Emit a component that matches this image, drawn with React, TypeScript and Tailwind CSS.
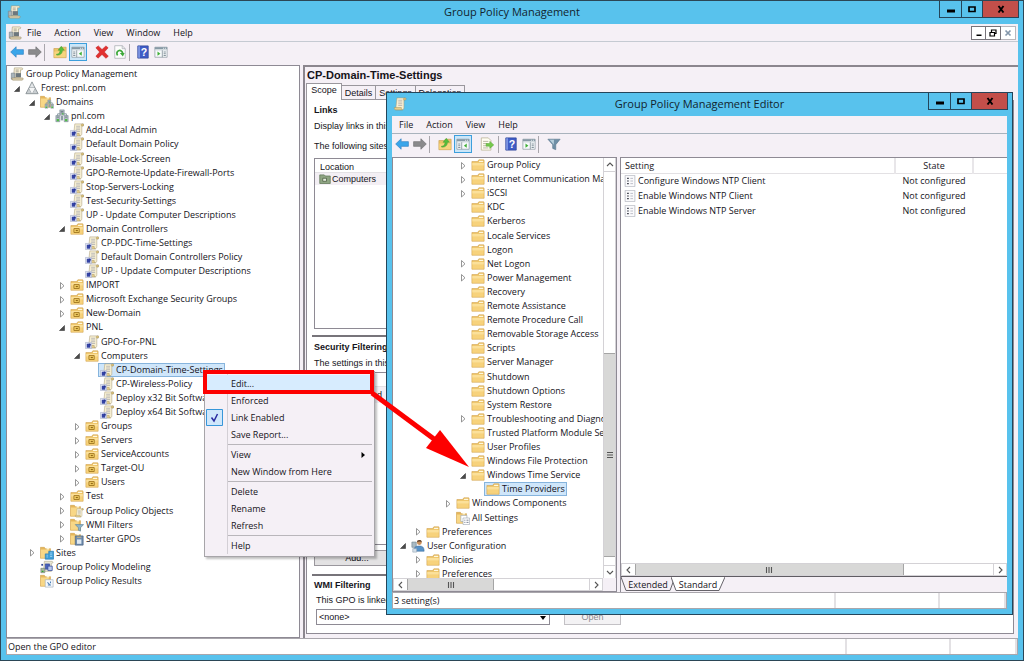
import type { ReactNode } from 'react';
import clsx from 'clsx';

type IconName =
  | 'console' | 'scroll' | 'forest' | 'domains' | 'domain' | 'gpo' | 'ou' | 'folder'
  | 'gpoFolder' | 'wmi' | 'starter' | 'sites' | 'modeling' | 'results' | 'user' | 'allSettings'
  | 'setting' | 'back' | 'forward' | 'up' | 'pane' | 'paneRight' | 'delete' | 'refresh'
  | 'help' | 'export' | 'filter';

interface TreeNode {
  level: number;
  icon: IconName;
  label: string;
  open?: boolean;
  selected?: boolean;
}

const consoleTree: TreeNode[] = [
  { level: 0, icon: 'console', label: 'Group Policy Management' },
  { level: 1, icon: 'forest', label: 'Forest: pnl.com', open: true },
  { level: 2, icon: 'domains', label: 'Domains', open: true },
  { level: 3, icon: 'domain', label: 'pnl.com', open: true },
  { level: 4, icon: 'gpo', label: 'Add-Local Admin' },
  { level: 4, icon: 'gpo', label: 'Default Domain Policy' },
  { level: 4, icon: 'gpo', label: 'Disable-Lock-Screen' },
  { level: 4, icon: 'gpo', label: 'GPO-Remote-Update-Firewall-Ports' },
  { level: 4, icon: 'gpo', label: 'Stop-Servers-Locking' },
  { level: 4, icon: 'gpo', label: 'Test-Security-Settings' },
  { level: 4, icon: 'gpo', label: 'UP - Update Computer Descriptions' },
  { level: 4, icon: 'ou', label: 'Domain Controllers', open: true },
  { level: 5, icon: 'gpo', label: 'CP-PDC-Time-Settings' },
  { level: 5, icon: 'gpo', label: 'Default Domain Controllers Policy' },
  { level: 5, icon: 'gpo', label: 'UP - Update Computer Descriptions' },
  { level: 4, icon: 'ou', label: 'IMPORT', open: false },
  { level: 4, icon: 'ou', label: 'Microsoft Exchange Security Groups', open: false },
  { level: 4, icon: 'ou', label: 'New-Domain', open: false },
  { level: 4, icon: 'ou', label: 'PNL', open: true },
  { level: 5, icon: 'gpo', label: 'GPO-For-PNL' },
  { level: 5, icon: 'ou', label: 'Computers', open: true },
  { level: 6, icon: 'gpo', label: 'CP-Domain-Time-Settings', selected: true },
  { level: 6, icon: 'gpo', label: 'CP-Wireless-Policy' },
  { level: 6, icon: 'gpo', label: 'Deploy x32 Bit Software' },
  { level: 6, icon: 'gpo', label: 'Deploy x64 Bit Software' },
  { level: 5, icon: 'ou', label: 'Groups', open: false },
  { level: 5, icon: 'ou', label: 'Servers', open: false },
  { level: 5, icon: 'ou', label: 'ServiceAccounts', open: false },
  { level: 5, icon: 'ou', label: 'Target-OU', open: false },
  { level: 5, icon: 'ou', label: 'Users', open: false },
  { level: 4, icon: 'ou', label: 'Test', open: false },
  { level: 4, icon: 'gpoFolder', label: 'Group Policy Objects', open: false },
  { level: 4, icon: 'wmi', label: 'WMI Filters', open: false },
  { level: 4, icon: 'starter', label: 'Starter GPOs', open: false },
  { level: 2, icon: 'sites', label: 'Sites', open: false },
  { level: 2, icon: 'modeling', label: 'Group Policy Modeling' },
  { level: 2, icon: 'results', label: 'Group Policy Results' },
];

const editorTree: TreeNode[] = [
  { level: 5, icon: 'folder', label: 'Group Policy', open: false },
  { level: 5, icon: 'folder', label: 'Internet Communication Management', open: false },
  { level: 5, icon: 'folder', label: 'iSCSI', open: false },
  { level: 5, icon: 'folder', label: 'KDC' },
  { level: 5, icon: 'folder', label: 'Kerberos' },
  { level: 5, icon: 'folder', label: 'Locale Services' },
  { level: 5, icon: 'folder', label: 'Logon' },
  { level: 5, icon: 'folder', label: 'Net Logon', open: false },
  { level: 5, icon: 'folder', label: 'Power Management', open: false },
  { level: 5, icon: 'folder', label: 'Recovery' },
  { level: 5, icon: 'folder', label: 'Remote Assistance' },
  { level: 5, icon: 'folder', label: 'Remote Procedure Call' },
  { level: 5, icon: 'folder', label: 'Removable Storage Access' },
  { level: 5, icon: 'folder', label: 'Scripts' },
  { level: 5, icon: 'folder', label: 'Server Manager' },
  { level: 5, icon: 'folder', label: 'Shutdown' },
  { level: 5, icon: 'folder', label: 'Shutdown Options' },
  { level: 5, icon: 'folder', label: 'System Restore' },
  { level: 5, icon: 'folder', label: 'Troubleshooting and Diagnostics', open: false },
  { level: 5, icon: 'folder', label: 'Trusted Platform Module Services' },
  { level: 5, icon: 'folder', label: 'User Profiles' },
  { level: 5, icon: 'folder', label: 'Windows File Protection' },
  { level: 5, icon: 'folder', label: 'Windows Time Service', open: true },
  { level: 6, icon: 'folder', label: 'Time Providers', selected: true },
  { level: 4, icon: 'folder', label: 'Windows Components', open: false },
  { level: 4, icon: 'allSettings', label: 'All Settings' },
  { level: 2, icon: 'folder', label: 'Preferences', open: false },
  { level: 1, icon: 'user', label: 'User Configuration', open: true },
  { level: 2, icon: 'folder', label: 'Policies', open: false },
  { level: 2, icon: 'folder', label: 'Preferences', open: false },
];

const settings = [
  { name: 'Configure Windows NTP Client', state: 'Not configured' },
  { name: 'Enable Windows NTP Client', state: 'Not configured' },
  { name: 'Enable Windows NTP Server', state: 'Not configured' },
];

const menuGroups: Array<Array<{ label: string; hot?: boolean; checked?: boolean; submenu?: boolean }>> = [
  [{ label: 'Edit...', hot: true }, { label: 'Enforced' }, { label: 'Link Enabled', checked: true }, { label: 'Save Report...' }],
  [{ label: 'View', submenu: true }, { label: 'New Window from Here' }],
  [{ label: 'Delete' }, { label: 'Rename' }, { label: 'Refresh' }],
  [{ label: 'Help' }],
];

const yellowFolder = (
  <>
    <path d="M1 4h6.500l1.500-2h5.500l.5 1v11H1z" fill="#e9bd5c" stroke="#cfa04a" strokeWidth=".6" />
    <path d="M9.500 3h4.500v1.500H8.700z" fill="#fff8df" />
    <path d="M1.500 5.500h13v8h-13z" fill="#f7d27c" />
    <path d="M1.500 5.500h13v3h-13z" fill="#fbe09a" />
  </>
);

const narrowFolder = (
  <>
    <path d="M.5 1.500h4.500l1 1.500h6v11H.5z" fill="#e6b75a" stroke="#cc9c45" strokeWidth=".6" />
    <path d="M1 4h9v9.500H1z" fill="#f8d786" />
    <path d="M7.500 2h3v2h-3z" fill="#fff6d8" />
  </>
);

const servers = (
  <>
    <path d="M3 9V5.500h10V9M8 6.500V4" stroke="#7d8f99" fill="none" />
    <path d="M5.500 1h5v6h-5zM1 7.500h4.500v7H1zM10.500 7.500H15v7h-4.500z" fill="#b3bfc5" stroke="#7c8b94" strokeWidth=".7" />
    <path d="M6.500 2.800h3M6.500 4.500h3M2 9.300h2.500M11.500 9.300H14" stroke="#56666f" strokeWidth=".8" />
    <path d="M2 11.500h2.500V14H2zM11.500 11.500H14V14h-2.500zM8 4.800h1.800v1.600H8z" fill="#4fbb45" />
    <path d="M6.700 8h2.600v5H6.700z" fill="#8d9ca5" />
  </>
);

const parchment = (
  <>
    <path d="M4.500 1h9.500c1.300 0 1.500 2.200 0 2.400h-1.500V12c0 2-1 2.700-2.500 2.700H3z" fill="#f7efd2" stroke="#a89b78" strokeWidth=".6" />
    <path d="M12.500 3.400c-1 0-1-2.400.8-2.400 1.700 0 1.500 2.400.3 2.400z" fill="#e0c476" stroke="#9c8955" strokeWidth=".5" />
    <path d="M1.500 12h8c0 1.500.4 2.500 1.400 2.700H3c-1.200 0-1.700-1.300-1.500-2.700z" fill="#e7cf8c" stroke="#9c8955" strokeWidth=".5" />
    <path d="M6 3.700h4.500M6 5.700h4.500M6 7.700h4.500M6 9.700h4.500" stroke="#a5a6ad" strokeWidth=".8" />
  </>
);

const paneFrame = (
  <>
    <path d="M1 2.500h14v11.500H1z" fill="#f7fafb" stroke="#8b98a1" strokeWidth=".8" />
    <path d="M1 2.500h14v2.500H1z" fill="#8799a5" />
    <path d="M10.500 3.800h1M12.500 3.800h1" stroke="#fff" />
    <path d="M1 5.800h14" stroke="#d3dbe0" />
  </>
);

const drawings: Record<IconName, ReactNode> = {
  console: (
    <>
      <path d="M5 1h8.500c1.300 0 1.500 2 0 2.200H12V12H4z" fill="#f5eed6" stroke="#a89b78" strokeWidth=".7" />
      <path d="M6.500 3.500H10M6.500 5.500H10" stroke="#a39d8c" />
      <path d="M1.500 7h4v7h-4z" fill="#a9b5bb" stroke="#74818a" strokeWidth=".7" />
      <path d="M6.500 7h6v4.500h-6z" fill="#6c777d" />
      <path d="M2 12.500h12.500c.8 0 .8 2.500-.8 2.500H3z" fill="#dccfae" stroke="#948765" strokeWidth=".6" />
    </>
  ),
  scroll: parchment,
  forest: (
    <>
      <path d="M8 1 11.500 8H4.500z" fill="#e4e7e9" stroke="#7d868b" strokeWidth=".9" />
      <path d="M4.500 8 8 14.500H1zM11.500 8 15 14.500H8z" fill="#c9ced1" stroke="#7d868b" strokeWidth=".9" />
      <path d="M4.500 8h7L8 14.500z" fill="#f4f5f6" />
    </>
  ),
  domains: (
    <>
      {narrowFolder}
      <g transform="translate(5 5) scale(.7)">{servers}</g>
    </>
  ),
  domain: servers,
  gpo: (
    <>
      <g transform="translate(1 0)">{parchment}</g>
      <path d="M.5 8.500h7v7h-7z" fill="#e9edf8" stroke="#a4adc8" strokeWidth=".7" />
      <path d="M2 10h4v4.500H2z" fill="#3443a3" />
      <path d="m4 9.800 2.500.2v2.500z" fill="#1d2b8f" />
    </>
  ),
  ou: (
    <>
      {yellowFolder}
      <path d="M4.500 7.500h6v4.500h-6z" fill="#f6d368" stroke="#a67c25" strokeWidth="1.100" />
      <path d="M6.500 9h2.500v1.500H6.500z" fill="#93691a" />
    </>
  ),
  folder: yellowFolder,
  gpoFolder: (
    <>
      {narrowFolder}
      <g transform="translate(5 4.500) scale(.7)">{parchment}</g>
    </>
  ),
  wmi: (
    <>
      {narrowFolder}
      <path d="M6 7.500h9.500l-3.500 3.700V15l-2.400-1v-2.800z" fill="#8fb5ca" stroke="#5c8196" strokeWidth=".7" />
    </>
  ),
  starter: (
    <>
      {narrowFolder}
      <path d="M6 4.500h9v10.500H6z" fill="#6f8db0" stroke="#4a617d" strokeWidth=".8" />
      <path d="M8 8.500h5v5H8z" fill="#dfe9f2" />
      <path d="M8 6h5" stroke="#d8bd87" />
    </>
  ),
  sites: (
    <>
      {narrowFolder}
      <path d="M6 9h4V6h5.500v9H6z" fill="#3f9fd8" stroke="#2a7fb7" strokeWidth=".8" />
      <path d="M7.500 10.500h1.500M7.500 12.500h1.500M11.500 8H14M11.500 10H14M11.500 12H14" stroke="#b9e2f8" strokeWidth=".8" />
    </>
  ),
  modeling: (
    <>
      <path d="M5 1.500h9l1 1.500-2 1v9H4z" fill="#e9e6d4" stroke="#a9a283" strokeWidth=".6" />
      <path d="M6 4.500h5v6H6z" fill="#4a63bd" stroke="#2f4596" strokeWidth=".7" />
      <path d="M9 7h5v5H9z" fill="#b9c9ef" stroke="#2f4596" strokeWidth=".8" />
      <path d="M1 9.500h4.500v5H1z" fill="#a9b7a2" stroke="#6c7d69" strokeWidth=".7" />
      <path d="M2 13h2" stroke="#2fa52a" strokeWidth="1.400" />
      <path d="M1.500 4.500h2v2h-2z" fill="#2f4596" />
    </>
  ),
  results: (
    <>
      {narrowFolder}
      <path d="M6 6.500h9v8.500H6z" fill="#f4f8fc" stroke="#a3afbc" strokeWidth=".7" />
      <path d="M8.500 9.500 11 12M9 12.500h3.500M12 8.500v2" stroke="#4d7fb8" fill="none" strokeWidth="1.200" />
    </>
  ),
  user: (
    <>
      <path d="M1 3.500h5v6H1z" fill="#a9bac4" stroke="#6f818b" strokeWidth=".7" />
      <circle cx="9.500" cy="4" r="2.800" fill="#c98f5a" />
      <path d="M6.800 3.500c0-3 5.500-3.200 5.500 0-1.500-1-3.500-1-5.500 0z" fill="#5c4230" />
      <path d="M3 14c0-4 2-6 6.500-6s5.500 2.500 5.500 6z" fill="#5791c6" stroke="#3c6c9d" strokeWidth=".6" />
      <path d="M2 11h4.500v4H2z" fill="#d5e0e9" stroke="#8c9cab" strokeWidth=".6" />
    </>
  ),
  allSettings: (
    <>
      {narrowFolder}
      <path d="M5.500 5h7v7h-7z" fill="#fff" stroke="#9aa5b0" strokeWidth=".7" />
      <path d="M8 8h7.500v7.500H8z" fill="#fff" stroke="#9aa5b0" strokeWidth=".7" />
      <path d="M9.500 10.500h1.200M12 10.500h2.300M9.500 13h1.200M12 13h2.300" stroke="#6a7488" />
    </>
  ),
  setting: (
    <>
      <path d="M1.500.5h13v15h-13z" fill="#fafafc" stroke="#b3b5bf" />
      <path d="M4 4.500h2.500M4 8h2.500M4 11.500h2.500" stroke="#4b4e58" strokeWidth="1.600" />
      <path d="M8.500 4.500H12M8.500 8H12M8.500 11.500H12" stroke="#a9abb8" />
    </>
  ),
  back: <path d="M.8 8 7 2v3.300h8.300v5.400H7V14z" fill="#3aa6ea" stroke="#3284c4" strokeWidth=".8" />,
  forward: <path d="M15.200 8 9 2v3.300H.7v5.400H9V14z" fill="#8a8a8c" stroke="#727276" strokeWidth=".8" />,
  up: (
    <>
      <path d="M1 4h6l1.500-1.500H15V14.500H1z" fill="#edc468" stroke="#c79d4a" strokeWidth=".7" />
      <path d="M1.500 7.500h13v6.500h-13z" fill="#f7d57f" />
      <path d="M4 10.500c3 0 4-2 4-4.500H5.800L9.500 1.500 13 6h-2.200c0 4-2.800 6-6.800 5.500z" fill="#57bd3c" stroke="#3f9a2d" strokeWidth=".5" />
    </>
  ),
  pane: (
    <>
      {paneFrame}
      <path d="M6.500 6v8" stroke="#8b98a1" />
      <path d="M2.500 8H5M2.500 10H5M2.500 12H5" stroke="#71818c" />
      <path d="M12.300 7.500v4.800L9 9.900z" fill="#3fae35" />
    </>
  ),
  paneRight: (
    <>
      {paneFrame}
      <path d="M9.500 6v8" stroke="#8b98a1" />
      <path d="M11 8h2.500M11 10h2.500M11 12h2.500" stroke="#71818c" />
      <path d="M4 7.500v4.800l3.300-2.400z" fill="#3fae35" />
    </>
  ),
  delete: <path d="M1 3.200 3.800 1 8 5.200 12.500 1 15 3.200 10.700 8l4.500 4.800-2.700 2.400L8 10.800 3.500 15 1 12.800 5.300 8z" fill="#e23030" stroke="#bd2020" strokeWidth=".6" />,
  refresh: (
    <>
      <path d="M2 .8h8.500L14 4.200v11H2z" fill="#fdfdfd" stroke="#a3a9ae" strokeWidth=".8" />
      <path d="M10.500.8v3.400H14" fill="none" stroke="#a3a9ae" strokeWidth=".8" />
      <path d="M5.300 11.800A3.300 3.300 0 1 1 11 9.300" fill="none" stroke="#3da83a" strokeWidth="2" />
      <path d="M7.800 9h5.500l-2 4z" fill="#3da83a" />
    </>
  ),
  help: (
    <>
      <path d="M2 1h12v14H2z" fill="#3f5cc6" stroke="#2d4398" strokeWidth=".8" />
      <path d="M2.500 1.500h2v13h-2z" fill="#7f97e2" />
      <text x="9.200" y="12.500" fontSize="12" fontWeight="700" textAnchor="middle" fill="#fff" fontFamily="Liberation Sans, sans-serif">?</text>
    </>
  ),
  export: (
    <>
      <path d="M1.500 1h8l3 3v11h-11z" fill="#fffdf2" stroke="#b5ac8b" strokeWidth=".8" />
      <path d="M3.500 5h6M3.500 7.500h5M3.500 10h4M3.500 12.500h6" stroke="#b3ae9c" />
      <path d="M7 7.500h4.200V5L15.700 9l-4.500 4v-2.500H7z" fill="#77c94c" stroke="#52a534" strokeWidth=".6" />
    </>
  ),
  filter: (
    <>
      <path d="M1 2.500h14L10 8.800V14.500L6.500 13V8.800z" fill="#6f8fa6" stroke="#5a788d" strokeWidth=".7" />
      <path d="M3 3.200h5L7.500 12V8.500z" fill="#b7cfdc" />
    </>
  ),
};

function Icon({ name, className = 'size-3.5' }: { name: IconName; className?: string }) {
  return (
    <svg viewBox="0 0 16 16" className={clsx('shrink-0', className)} aria-hidden="true">
      {drawings[name]}
    </svg>
  );
}

function Tree({ nodes, label, className }: { nodes: TreeNode[]; label: string; className: string }) {
  return (
    <ul role="tree" aria-label={label} className={clsx('grid auto-rows-fr', className)}>
      {nodes.map((node, i) => {
        const hasArrow = node.open !== undefined;
        return (
          <li
            key={i}
            role="treeitem"
            aria-level={node.level + 1}
            aria-expanded={node.open}
            aria-selected={!!node.selected}
            className="flex min-h-0 items-center whitespace-nowrap leading-3"
            style={{ paddingLeft: node.level * 15 + (hasArrow ? -10 : 1) }}
          >
            {hasArrow && (
              <svg viewBox="0 0 11 11" className="size-[11px] shrink-0" aria-hidden="true">
                {node.open ? <path d="M7.500 3.500v5h-5z" fill="#4a4a4a" stroke="#3a3a3a" strokeWidth=".6" /> : <path d="M3.500 2.500v6.500L7 5.800z" fill="#fff" stroke="#8a8a8a" strokeWidth=".9" />}
              </svg>
            )}
            <span
              className={clsx(
                'flex h-3.5 items-center gap-0.5 border px-px',
                node.selected ? 'border-[#86b4dd] bg-[#cfe6fa]' : 'border-transparent',
              )}
            >
              <Icon name={node.icon} />
              <span>{node.label}</span>
            </span>
          </li>
        );
      })}
    </ul>
  );
}

function CaptionButtons() {
  return (
    <div className="flex h-[17px] border border-t-0 border-[#24455a]">
      <button aria-label="Minimize" className="flex w-[21px] items-center justify-center">
        <svg viewBox="0 0 10 8" className="h-2 w-2.5"><path d="M1 4.500h8v3H1z" /></svg>
      </button>
      <button aria-label="Maximize" className="flex w-[21px] items-center justify-center border-l border-[#24455a]">
        <svg viewBox="0 0 10 8" className="h-2 w-2.5"><path d="M2 2h6v4.500H2z" fill="none" stroke="#000" strokeWidth="1.700" /></svg>
      </button>
      <button aria-label="Close" className="flex w-9 items-center justify-center border-l border-[#24455a] bg-[#c24f4a]">
        <svg viewBox="0 0 10 8" className="h-2 w-2.5"><path d="m2.500 1 5 6.500M7.500 1l-5 6.500" stroke="#000" strokeWidth="1.900" /></svg>
      </button>
    </div>
  );
}

function TitleBar({ title, icon }: { title: string; icon: IconName }) {
  return (
    <header className="grid h-[23px] shrink-0 grid-cols-[1fr_auto_1fr] items-start px-1">
      <Icon name={icon} className="mt-1 ml-0.5 size-3.5" />
      <h1 className="pt-[3px] text-[11px] leading-4 text-[#12242e]">{title}</h1>
      <div className="flex justify-end">
        <CaptionButtons />
      </div>
    </header>
  );
}

function ToolButton({ icon, label, active }: { icon: IconName; label: string; active?: boolean }) {
  return (
    <button
      aria-label={label}
      aria-pressed={active}
      className={clsx(
        'flex h-[18px] w-[18px] items-center justify-center border',
        active ? 'border-[#3d9fdc] bg-[#cbe6f8]' : 'border-transparent',
      )}
    >
      <Icon name={icon} />
    </button>
  );
}

function Divider() {
  return <span className="h-[17px] w-px bg-[#a9a6ac]" />;
}

function Glyph({ d }: { d: string }) {
  return (
    <svg viewBox="0 0 8 8" className="size-2" aria-hidden="true">
      <path d={d} fill="none" stroke="#555" strokeWidth="1.100" />
    </svg>
  );
}

function HScroll({ thumb }: { thumb: string }) {
  return (
    <div className="flex h-[13px] min-w-0 flex-1 border border-[#d4d2d6] bg-white">
      <button aria-label="Scroll left" className="flex w-[13px] shrink-0 items-center justify-center">
        <Glyph d="M5 1 2 4l3 3" />
      </button>
      <div className="flex flex-1">
        <div className={clsx('flex items-center justify-center border-x border-[#a5a5a5] bg-[#d8d8d7]', thumb)}>
          <Glyph d="M1.500 1v6M4 1v6M6.500 1v6" />
        </div>
      </div>
      <button aria-label="Scroll right" className="flex w-[13px] shrink-0 items-center justify-center border-l border-[#d4d2d6]">
        <Glyph d="m3 1 3 3-3 3" />
      </button>
    </div>
  );
}

function StatusBar({ text }: { text: string }) {
  return (
    <footer className="flex h-[17px] shrink-0 items-stretch border border-[#a9a6ac] bg-white">
      <span className="flex-1 self-center px-px leading-3">{text}</span>
      <span className="w-[104px] border-l-2 border-[#e3e1e4]" />
      <span className="w-[68px] border-x-2 border-[#e3e1e4]" />
    </footer>
  );
}

function ContextMenu() {
  return (
    <div role="menu" className="absolute top-[370px] left-[203px] z-20 w-[171px] border border-[#a7a5a9] bg-[#f5f0f6] pt-[3px] pb-0.5 shadow-[2px_2px_2px_rgba(0,0,0,0.25)]">
      <div className="absolute inset-y-0.5 left-[22px] w-px bg-[#d3cfd5]" />
      {menuGroups.map((group, g) => (
        <div key={g}>
          {g > 0 && <hr className="mt-px mr-0.5 mb-px ml-[23px] border-[#b9b6bb]" />}
          {group.map((item) => (
            <button
              key={item.label}
              role={item.checked ? 'menuitemcheckbox' : 'menuitem'}
              aria-checked={item.checked}
              className={clsx('relative flex h-[17px] w-full items-center pr-2 text-left leading-3', item.hot && 'bg-[#d7ecfe]')}
            >
              <span className="flex w-[26px] shrink-0 pl-px">
                {item.checked && (
                  <svg viewBox="0 0 17 17" className="size-[17px]" aria-hidden="true">
                    <path d="M.5.500h16v16H.5z" fill="#cfe7fb" stroke="#3796d9" />
                    <path d="m5.500 8.500 2.500 3.500 3.500-7" fill="none" stroke="#2a2aa0" strokeWidth="1.500" />
                  </svg>
                )}
              </span>
              <span className="flex-1">{item.label}</span>
              {item.submenu && (
                <svg viewBox="0 0 5 6" className="h-1.5 w-[5px]" aria-hidden="true"><path d="M.5 0v6L4 3z" /></svg>
              )}
            </button>
          ))}
        </div>
      ))}
    </div>
  );
}

// red frame round "Edit..." and the arrow that leads to the Time Providers node
function Callout() {
  return (
    <>
      <div className="pointer-events-none absolute top-[369px] left-[202px] z-30 h-6 w-[171px] border-4 border-[#fd0000]" />
      <svg viewBox="0 0 100 80" className="pointer-events-none absolute top-[389px] left-[369px] z-30 h-20 w-[100px]" aria-hidden="true">
        <path d="m2 3 62 46" stroke="#fd0000" strokeWidth="5" />
        <path d="M70 40 56 58l43 19z" fill="#fd0000" />
      </svg>
    </>
  );
}

function ScopePanel() {
  return (
    <section className="flex min-w-0 flex-1 flex-col border-t-2 border-l-2 border-[#8b868e] bg-[#f5f0f6] pr-1 pb-1 pl-px font-['Liberation_Sans',sans-serif]">
      <h2 className="h-4 pl-px text-[11px] leading-4 font-bold">CP-Domain-Time-Settings</h2>
      <div role="tablist" className="flex h-[17px] items-end text-[9px] leading-3">
        <button role="tab" aria-selected="true" className="h-[17px] w-9 border border-b-0 border-[#9a979d] bg-white pb-1">Scope</button>
        <button role="tab" aria-selected="false" className="h-[15px] w-[34px] border border-l-0 border-[#9a979d]">Details</button>
        <button role="tab" aria-selected="false" className="h-[15px] w-10 border border-l-0 border-[#9a979d]">Settings</button>
        <button role="tab" aria-selected="false" className="h-[15px] w-[49px] border border-l-0 border-[#9a979d]">Delegation</button>
      </div>
      <div className="flex flex-1 flex-col border border-t-0 border-[#8e8a94] bg-white pl-[7px] text-[9px] leading-3 whitespace-nowrap">
        <h3 className="pt-1 font-bold">Links</h3>
        <p className="pt-1">Display links in this location:</p>
        <p className="pt-2">The following sites, domains</p>
        <div className="mt-1.5 h-[171px] w-[480px] border border-[#8e8a94]">
          <p className="h-3.5 border-b border-[#e3e1e4] pt-0.5 pl-[5px]">Location</p>
          <p className="flex items-center gap-px bg-[#f3eff4] pl-1">
            <svg viewBox="0 0 16 16" className="size-3"><path d="M1 2.500h6l1.500 1.500H15v10H1z" fill="#8fa583" stroke="#5f7556" /><path d="M5 7h5v4H5z" fill="#e4ecdd" stroke="#45573d" /></svg>
            Computers
          </p>
        </div>
        <hr className="mt-1.5 mr-2 -ml-0.5 border-t-2 border-[#77747a]" />
        <h3 className="pt-1 font-bold">Security Filtering</h3>
        <p className="pt-1">The settings in this GPO</p>
        <div className="mt-[3px] h-[173px] w-[480px] border border-[#8e8a94]">
          <p className="h-3.5 border-b border-[#e3e1e4] pt-0.5 pl-[5px]">Name</p>
          <p className="bg-[#f3eff4] py-0.5 pl-3">Authenticated</p>
        </div>
        <button className="mt-[5px] h-4 w-[86px] border border-[#9a979d] bg-[#e3e2e3]">Add...</button>
        <hr className="mt-2 mr-2 -ml-0.5 border-t-2 border-[#77747a]" />
        <h3 className="pt-[3px] font-bold">WMI Filtering</h3>
        <label htmlFor="wmi-filter" className="pt-[3px] pl-0.5">This GPO is linked</label>
        <div className="mt-[3px] flex gap-3.5 pl-0.5">
          <div className="relative">
            <select id="wmi-filter" className="h-4 w-[234px] appearance-none border border-[#8e8a94] bg-white px-0.5">
              <option>&lt;none&gt;</option>
            </select>
            <svg viewBox="0 0 6 4" className="pointer-events-none absolute top-[7px] right-1 h-1 w-1.5"><path d="M0 0h6L3 4z" /></svg>
          </div>
          <button disabled className="h-4 w-[57px] border border-[#c3c1c5] bg-[#f3f2f4] text-[#8c8a8e]">Open</button>
        </div>
      </div>
    </section>
  );
}

function EditorWindow() {
  return (
    <div className="absolute top-[91px] right-[10px] bottom-[45px] left-[385px] z-10 flex flex-col border border-[#24455a] bg-[#58c2ed]">
      <TitleBar title="Group Policy Management Editor" icon="scroll" />
      <div className="mx-[5px] mb-[5px] flex min-h-0 flex-1 flex-col bg-[#f5f0f6]">
        <nav className="flex h-[18px] shrink-0 items-center gap-[13px] border-b border-[#a9b3bd] px-[7px]">
          <button>File</button>
          <button>Action</button>
          <button>View</button>
          <button>Help</button>
        </nav>
        <div className="flex h-[23px] shrink-0 items-center pb-[3px] pl-px">
          <ToolButton icon="back" label="Back" />
          <ToolButton icon="forward" label="Forward" />
          <Divider />
          <div className="ml-1.5 flex">
            <ToolButton icon="up" label="Up one level" />
            <ToolButton icon="pane" label="Show console tree" active />
          </div>
          <div className="mr-0.5 ml-1.5 flex"><ToolButton icon="export" label="Export list" /></div>
          <Divider />
          <div className="ml-[3px] flex">
            <ToolButton icon="help" label="Help" />
            <ToolButton icon="paneRight" label="Show action pane" />
          </div>
          <Divider />
          <div className="ml-1.5 flex"><ToolButton icon="filter" label="Filter" /></div>
        </div>

        <div className="flex min-h-0 flex-1 gap-[3px]">
          <div className="flex w-[225px] shrink-0 flex-col border border-[#8e8a94] bg-white">
            <div className="flex min-h-0 flex-1">
              <div className="min-w-0 flex-1 overflow-hidden">
                <Tree nodes={editorTree} label="Policy tree" className="h-[423px]" />
              </div>
              <div className="flex w-[13px] flex-col border-x border-[#d4d2d6]">
                <button aria-label="Scroll up" className="flex h-3.5 items-center justify-center border-b border-[#d4d2d6]"><Glyph d="m1 5 3-3 3 3" /></button>
                <div className="flex flex-1 flex-col justify-end pb-2">
                  <div className="flex h-[53%] items-center justify-center border-y border-[#a5a5a5] bg-[#d8d8d7]"><Glyph d="M1 1.500h6M1 4h6M1 6.500h6" /></div>
                </div>
                <button aria-label="Scroll down" className="flex h-[13px] items-center justify-center border-t border-[#d4d2d6]"><Glyph d="m1 3 3 3 3-3" /></button>
              </div>
            </div>
            <div className="flex bg-[#f5f0f6] pr-[13px]"><HScroll thumb="w-[48%]" /></div>
          </div>

          <div className="flex min-w-0 flex-1 flex-col border-t border-l border-[#8e8a94]">
            <div className="flex min-h-0 flex-1 flex-col border-b border-[#5f5c63] bg-white">
              <div className="flex-1">
                <table className="w-full table-fixed text-left">
                  <thead>
                    <tr className="h-[15px] border-b border-[#e3e1e4]">
                      <th className="pl-1 font-normal">Setting</th>
                      <th className="w-[78px] border-x-2 border-[#e8e6e9] text-center font-normal">State</th>
                      <th className="w-[34px]" aria-label="Comment" />
                    </tr>
                  </thead>
                  <tbody>
                    {settings.map((s) => (
                      <tr key={s.name} className="h-[15px]">
                        <td>
                          <span className="flex items-center gap-0.5 pl-[3px] leading-3"><Icon name="setting" className="size-3" />{s.name}</span>
                        </td>
                        <td className="text-center whitespace-nowrap">{s.state}</td>
                        <td />
                      </tr>
                    ))}
                  </tbody>
                </table>
              </div>
              <div className="flex"><HScroll thumb="w-3/4" /></div>
            </div>
            <div role="tablist" className="flex h-[15px] shrink-0 leading-3">
              <button role="tab" aria-selected="false" className="relative w-[54px]">
                <svg viewBox="0 0 54 14" preserveAspectRatio="none" className="absolute inset-0 h-3.5 w-full" aria-hidden="true"><path d="M0 0l5 13.500h44L54 0" fill="#f5f0f6" stroke="#66636a" /></svg>
                <span className="relative">Extended</span>
              </button>
              <button role="tab" aria-selected="true" className="relative -ml-1 w-[54px]">
                <svg viewBox="0 0 54 14" preserveAspectRatio="none" className="absolute inset-0 h-3.5 w-full" aria-hidden="true"><path d="M0 0l5 13.500h43L54 0" fill="#fff" stroke="#66636a" /></svg>
                <span className="relative">Standard</span>
              </button>
            </div>
          </div>
        </div>
        <StatusBar text="3 setting(s)" />
      </div>
    </div>
  );
}

export default function App() {
  return (
    <main className="relative flex h-screen min-h-[661px] flex-col overflow-hidden border border-[#2b4656] bg-[#58c2ed] font-['Open_Sans','Noto_Sans',sans-serif] text-[9px] text-[#15131a]">
      <TitleBar title="Group Policy Management" icon="console" />
      <div className="mx-[5px] mb-[5px] flex min-h-0 flex-1 flex-col bg-[#f5f0f6]">
        <nav className="flex h-[18px] shrink-0 items-center gap-[13px] border-b border-[#c5cad2] pl-0.5">
          <div className="flex items-center gap-[5px]">
            <Icon name="console" />
            <button>File</button>
          </div>
          <button>Action</button>
          <button>View</button>
          <button>Window</button>
          <button>Help</button>
          <div className="mr-0.5 ml-auto flex h-3.5 bg-white">
            <button aria-label="Minimize child window" className="flex w-[15px] items-center justify-center border border-[#77747a]"><svg viewBox="0 0 8 8" className="size-2"><path d="M1.500 5.500h5V7h-5z" /></svg></button>
            <button aria-label="Restore child window" className="flex w-[15px] items-center justify-center border border-l-0 border-[#77747a]"><svg viewBox="0 0 8 8" className="size-2"><path d="M2.500 3V1h4.500v3.500H5.500M1 3.500h4.500V7H1z" fill="none" stroke="#000" strokeWidth="1.200" /></svg></button>
            <button aria-label="Close child window" className="flex w-[15px] items-center justify-center border border-l-0 border-[#b9b6bb]"><svg viewBox="0 0 8 8" className="size-2"><path d="m1.500 1.500 5 5m0-5-5 5" stroke="#8497ab" strokeWidth="1.700" /></svg></button>
          </div>
        </nav>
        <div className="flex h-[23px] shrink-0 items-center pb-[3px] pl-0.5">
          <ToolButton icon="back" label="Back" />
          <ToolButton icon="forward" label="Forward" />
          <Divider />
          <div className="ml-1.5 flex">
            <ToolButton icon="up" label="Up one level" />
            <ToolButton icon="pane" label="Show console tree" active />
          </div>
          <div className="ml-1.5 flex"><ToolButton icon="delete" label="Delete" /></div>
          <ToolButton icon="refresh" label="Refresh" />
          <Divider />
          <div className="ml-1 flex">
            <ToolButton icon="help" label="Help" />
            <ToolButton icon="paneRight" label="Show action pane" />
          </div>
        </div>
        <div className="flex min-h-0 flex-1 gap-[3px]">
          <div className="w-[294px] shrink-0 border border-[#8e8a94] bg-white pt-px">
            <Tree nodes={consoleTree} label="Console tree" className="h-[521px]" />
          </div>
          <ScopePanel />
        </div>
        <StatusBar text="Open the GPO editor" />
      </div>
      <EditorWindow />
      <ContextMenu />
      <Callout />
    </main>
  );
}
